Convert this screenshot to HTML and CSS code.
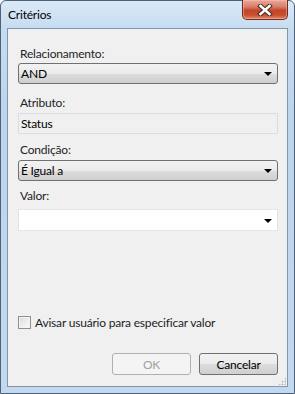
FILE: index.html
```html
<!DOCTYPE html>
<html lang="pt">
<head>
    <meta charset="UTF-8">
    <link rel="stylesheet" href="styles.css">
    <title>Critérios</title>
</head>
<body>
    <div class="window">
        <div class="titlebar">
            <span class="title">Critérios</span>
            <button class="close-btn" aria-label="Fechar">
                <svg width="16" height="12" viewBox="0 0 16 12">
                    <path d="M3.5 2 L12.5 10 M12.5 2 L3.5 10" stroke="#4a2a24" stroke-width="4.6" stroke-linecap="square" fill="none"/>
                    <path d="M3.5 2 L12.5 10 M12.5 2 L3.5 10" stroke="#ffffff" stroke-width="2.6" stroke-linecap="square" fill="none"/>
                </svg>
            </button>
        </div>

        <div class="client">
            <div class="field first">
                <label class="label">Relacionamento:</label>
                <div class="combo">
                    <span>AND</span>
                    <span class="arrow"></span>
                </div>
            </div>

            <div class="field second">
                <label class="label">Atributo:</label>
                <div class="textbox">Status</div>
            </div>

            <div class="field third">
                <label class="label">Condição:</label>
                <div class="combo">
                    <span>É Igual a</span>
                    <span class="arrow"></span>
                </div>
            </div>

            <div class="field fourth">
                <label class="label">Valor:</label>
                <div class="combo editable">
                    <span></span>
                    <span class="arrow"></span>
                </div>
            </div>

            <label class="check-row">
                <span class="checkbox"></span>
                Avisar usuário para especificar valor
            </label>

            <div class="buttons">
                <button class="btn" disabled>OK</button>
                <button class="btn">Cancelar</button>
            </div>

            <div class="grip"></div>
        </div>
    </div>
</body>
</html>
```

FILE: styles.css
```css
body {
    margin: 0;
    padding: 0;
    font-family: 'Lato', 'Noto Sans', sans-serif;
    font-size: 12px;
    letter-spacing: -0.2px;
    color: #000;
    background: #fff;
}

.window {
    width: 295px;
    height: 394px;
    box-sizing: border-box;
    border: 1px solid #4d6178;
    border-radius: 6px 6px 0 0;
    padding: 0 6px 6px 6px;
    display: flex;
    flex-direction: column;
    background: linear-gradient(to bottom, #dbe9f7 0px, #c6dcf1 28px, #bcd4ec 120px, #c3d9ef 394px);
}

.titlebar {
    height: 28px;
    display: flex;
    justify-content: space-between;
    align-items: flex-start;
}

.title {
    margin-top: 6px;
    margin-left: 1px;
    line-height: 15px;
    color: #000;
}

.close-btn {
    margin-top: -1px;
    width: 46px;
    height: 20px;
    padding: 0;
    border: 1px solid #6e2a1e;
    border-top: none;
    border-radius: 0 0 5px 5px;
    background: linear-gradient(to bottom, #e9a99c 0%, #d7806b 35%, #c4442a 55%, #c9502f 80%, #e28a67 100%);
    box-shadow: inset 0 0 0 1px rgba(255, 200, 190, 0.45);
    display: flex;
    align-items: center;
    justify-content: center;
}

.client {
    flex: 1;
    position: relative;
    background: #f0f0f0;
    border: 1px solid #8195ab;
    padding: 17px 9px 11px 10px;
    display: flex;
    flex-direction: column;
}

.label {
    display: block;
    line-height: 15px;
    padding-left: 2px;
    color: #1e1e1e;
}

.field.first .label {
    margin-bottom: 2px;
}

.field.second {
    margin-top: 11px;
}

.field.second .label,
.field.third .label {
    margin-bottom: 3px;
}

.field.third {
    margin-top: 8px;
}

.field.fourth {
    margin-top: 7px;
}

.field.fourth .label {
    margin-bottom: 6px;
}

.combo {
    height: 21px;
    box-sizing: border-box;
    border: 1px solid #707070;
    border-radius: 3px;
    background: linear-gradient(to bottom, #f2f2f2 0%, #ebebeb 50%, #dddddd 51%, #cfcfcf 100%);
    display: flex;
    align-items: center;
    justify-content: space-between;
    padding: 0 5px 0 2px;
    line-height: 15px;
}

.combo.editable {
    height: 22px;
    background: #fff;
    border: 1px solid #e2e6ea;
    border-radius: 0;
}

.arrow {
    width: 0;
    height: 0;
    border-left: 4px solid transparent;
    border-right: 4px solid transparent;
    border-top: 4px solid #000;
    margin-top: 1px;
}

.textbox {
    height: 21px;
    box-sizing: border-box;
    border: 1px solid #dadde1;
    background: #f0f0f0;
    padding: 0 2px;
    line-height: 19px;
}

.check-row {
    margin-top: 84px;
    display: flex;
    align-items: center;
    gap: 4px;
    line-height: 15px;
    color: #1e1e1e;
}

.checkbox {
    width: 11px;
    height: 11px;
    border: 1px solid #8e8f8f;
    background: linear-gradient(135deg, #dcdcdc, #fbfbfb);
    box-shadow: inset 0 0 0 1px #f4f4f4;
}

.buttons {
    margin-top: 23px;
    display: flex;
    justify-content: flex-end;
    gap: 8px;
}

.btn {
    width: 79px;
    height: 22px;
    font-family: inherit;
    font-size: 12px;
    letter-spacing: inherit;
    padding: 0;
    border: 1px solid #707070;
    border-radius: 3px;
    background: linear-gradient(to bottom, #f2f2f2 0%, #ebebeb 50%, #dddddd 51%, #cfcfcf 100%);
    color: #000;
}

.btn:disabled {
    border-color: #adb2b5;
    background: #f4f4f4;
    color: #a0a0a0;
}

.grip {
    position: absolute;
    right: 1px;
    bottom: 1px;
    width: 8px;
    height: 8px;
    background-image: radial-gradient(circle, #b8b8b8 0.9px, transparent 1.1px);
    background-size: 3px 3px;
    clip-path: polygon(100% 0, 100% 100%, 0 100%);
}
```
